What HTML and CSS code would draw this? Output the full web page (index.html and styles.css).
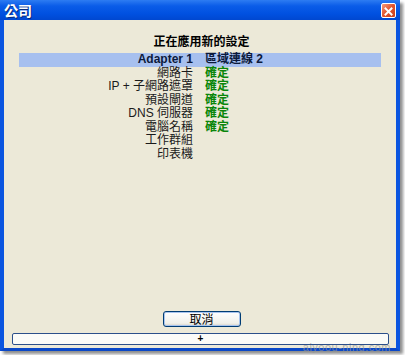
FILE: index.html
```html
<!DOCTYPE html>
<html lang="zh-Hant">
<head>
  <meta charset="UTF-8" />
  <title>公司</title>
  <link rel="stylesheet" href="styles.css">
</head>
<body>
  <div class="window">
    <div class="titlebar">
      <span class="title">公司</span>
      <span class="close">
        <svg width="15" height="15" viewBox="0 0 15 15">
          <path d="M4 4 L11 11 M11 4 L4 11" stroke="#fff" stroke-width="2.2" stroke-linecap="square"/>
        </svg>
      </span>
    </div>

    <div class="content">
      <h1 class="heading">正在應用新的設定</h1>

      <div class="status">
        <div class="row head"><span class="label">Adapter 1</span><span class="value">區域連線 2</span></div>
        <div class="row"><span class="label">網路卡</span><span class="value ok">確定</span></div>
        <div class="row"><span class="label">IP + 子網路遮罩</span><span class="value ok">確定</span></div>
        <div class="row"><span class="label">預設閘道</span><span class="value ok">確定</span></div>
        <div class="row"><span class="label">DNS 伺服器</span><span class="value ok">確定</span></div>
        <div class="row"><span class="label">電腦名稱</span><span class="value ok">確定</span></div>
        <div class="row"><span class="label">工作群組</span><span class="value"></span></div>
        <div class="row"><span class="label">印表機</span><span class="value"></span></div>
      </div>

      <div class="actions">
        <button class="btn">取消</button>
      </div>
      <div class="expander">+</div>
    </div>
  </div>
  <div class="watermark">aiyoou-ning.com</div>
</body>
</html>
```

FILE: styles.css
```css
* {
  margin: 0;
  padding: 0;
  box-sizing: border-box;
}

body {
  background: #ffffff;
  font-family: "Liberation Sans", "Noto Sans CJK TC", sans-serif;
  font-size: 12px;
  color: #000;
  position: relative;
  width: 405px;
  height: 355px;
  overflow: hidden;
}

.window {
  width: 400px;
  height: 351px;
  display: flex;
  flex-direction: column;
  background: #0054e3;
  border-left: 4px solid #0a55e0;
  border-right: 4px solid #0a55e0;
  border-bottom: 3px solid #0a48c8;
  box-shadow: 3px 3px 3px rgba(0, 0, 0, 0.45);
}

.titlebar {
  height: 20px;
  margin: 0 -4px;
  padding: 0 4px 0 4px;
  display: flex;
  align-items: center;
  justify-content: space-between;
  background: linear-gradient(#2d7cf2, #0a5ce8 30%, #0050e0 70%, #0047d0);
}

.title {
  color: #fff;
  font-weight: bold;
  font-size: 14px;
  font-family: "Noto Sans CJK TC", sans-serif;
  text-shadow: 1px 1px 0 #0a2c7a;
}

.close {
  width: 15px;
  height: 15px;
  border: 1px solid #fff;
  border-radius: 2px;
  background: linear-gradient(135deg, #f39a7c, #e2532c 50%, #c9401b);
  display: flex;
}

.content {
  flex: 1;
  display: flex;
  flex-direction: column;
  background: #ece9d8;
  padding: 13px 7px 3px 8px;
}

.heading {
  font-size: 12px;
  font-weight: bold;
  line-height: 16px;
  text-align: center;
  font-family: "Noto Sans CJK TC", sans-serif;
  margin-bottom: 4px;
  padding-left: 2px;
}

.status {
  margin: 0 8px 0 7px;
}

.row {
  display: grid;
  grid-template-columns: 174px 1fr;
  column-gap: 12px;
  height: 13.5px;
  line-height: 13.5px;
  font-size: 12px;
  font-family: "Liberation Sans", "Noto Sans CJK TC", sans-serif;
  color: #1a1a1a;
}

.row.head {
  background: #a7c0ef;
  font-weight: bold;
  color: #0c1a3c;
}

.label {
  text-align: right;
}

.value.ok {
  color: #0a860a;
  font-weight: bold;
}

.actions {
  margin-top: auto;
  display: flex;
  justify-content: center;
  padding-left: 2px;
}

.btn {
  width: 78px;
  height: 16px;
  font-family: "Noto Sans CJK TC", sans-serif;
  font-size: 12px;
  line-height: 12px;
  border: 1px solid #003c74;
  border-radius: 3px;
  background: linear-gradient(#ffffff, #f0f0ea 80%, #d6d0c5);
  box-shadow: inset 0 0 0 1px #a8c4ee;
}

.expander {
  margin-top: 6px;
  height: 12px;
  border: 1px solid #2b4f8a;
  border-radius: 2px;
  background: #fbfbf8;
  text-align: center;
  font-size: 10px;
  font-weight: bold;
  line-height: 9px;
}

.watermark {
  position: absolute;
  right: 14px;
  bottom: 2px;
  font-size: 11px;
  color: rgba(150, 150, 150, 0.7);
  letter-spacing: 0.5px;
}
```
